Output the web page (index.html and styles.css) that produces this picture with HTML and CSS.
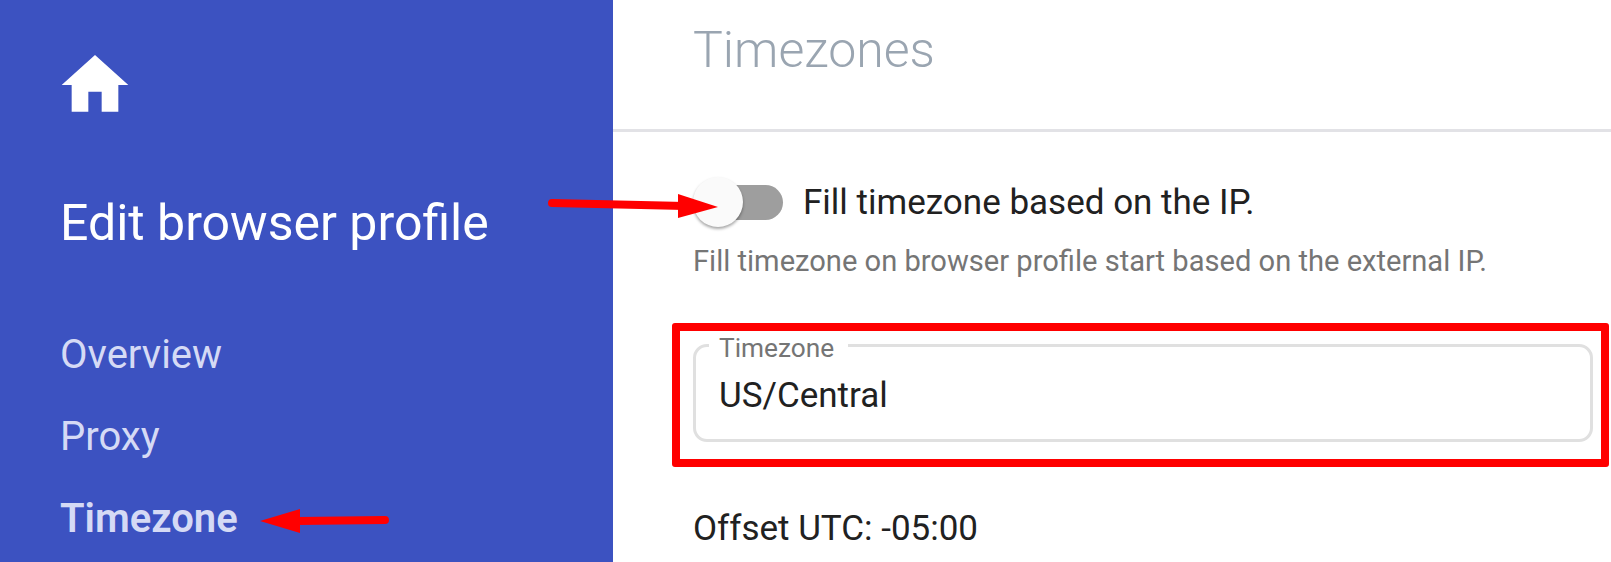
FILE: index.html

```html
<!DOCTYPE html>
<html lang="en">
<head>
    <meta charset="UTF-8">
    <title>Edit browser profile - Timezones</title>
    <link rel="stylesheet" href="styles.css">
</head>
<body>
    <aside class="sidebar">
        <svg class="home-icon" viewBox="0 0 24 24"><path d="M10 20v-6h4v6h5v-8h3L12 3 2 12h3v8z"/></svg>
        <h2 class="sidebar-title">Edit browser profile</h2>
        <nav class="sidebar-nav">
            <a href="#overview">Overview</a>
            <a href="#proxy">Proxy</a>
            <a href="#timezone" class="active">Timezone</a>
        </nav>
    </aside>

    <main class="content">
        <header class="content-header">
            <h1>Timezones</h1>
        </header>
        <section class="content-body">
            <div class="switch-row">
                <span class="switch"><span class="switch-thumb"></span></span>
                <span class="switch-label">Fill timezone based on the IP.</span>
            </div>
            <p class="helper">Fill timezone on browser profile start based on the external IP.</p>
            <fieldset class="field">
                <legend>Timezone</legend>
                <div class="field-value">US/Central</div>
            </fieldset>
            <p class="offset">Offset UTC: -05:00</p>
        </section>
    </main>

    <!-- red annotations drawn over the screenshot -->
    <div class="mark-box"></div>
    <svg class="marks" viewBox="0 0 1611 562">
        <path class="mark-line" d="M552 203 L685 206"/>
        <polygon class="mark-head" points="678,194 718,207 678,218"/>
        <path class="mark-line" d="M385 520 L297 521"/>
        <polygon class="mark-head" points="300,509 260,521 300,533"/>
    </svg>
</body>
</html>
```

FILE: styles.css

```css
* {
    margin: 0;
    padding: 0;
    box-sizing: border-box;
}

body {
    font-family: Roboto, sans-serif;
    background: #fff;
    color: #212121;
    height: 100vh;
    overflow: hidden;
    display: flex;
}

.sidebar {
    width: 613px;
    flex-shrink: 0;
    background: #3c52c1;
    padding: 45px 0 0 60px;
}

.home-icon {
    display: block;
    width: 80px;
    height: 80px;
    margin-left: -5px;
    fill: #fff;
}

.sidebar-title {
    margin-top: 66px;
    font-size: 50px;
    line-height: 64px;
    font-weight: 400;
    color: #fff;
}

.sidebar-nav {
    margin-top: 70px;
    display: flex;
    flex-direction: column;
    gap: 22px;
}

.sidebar-nav a {
    font-size: 40px;
    line-height: 60px;
    color: #d5daf5;
    text-decoration: none;
}

.sidebar-nav a.active {
    font-weight: 600;
}

.content {
    flex: 1;
    min-width: 0;
}

.content-header {
    height: 132px;
    padding-left: 80px;
    border-bottom: 3px solid #e2e2e6;
}

.content-header h1 {
    font-size: 50px;
    line-height: 100px;
    font-weight: 300;
    color: #9aa5b1;
}

.content-body {
    padding: 45px 18px 0 80px;
}

.switch-row {
    display: flex;
    align-items: center;
    height: 50px;
}

.switch {
    position: relative;
    display: block;
    width: 85px;
    height: 35px;
    margin-left: 5px;
    border-radius: 18px;
    background: #9e9e9e;
}

.switch-thumb {
    position: absolute;
    left: -5px;
    top: -8px;
    width: 50px;
    height: 50px;
    border-radius: 50%;
    background: #fafafa;
    box-shadow: 0 2px 3px rgba(0, 0, 0, 0.35);
}

.switch-label {
    margin-left: 20px;
    font-size: 35px;
}

.helper {
    margin-top: 16px;
    font-size: 29.1px;
    line-height: 36px;
    color: #757575;
}

.field {
    margin-top: 50px;
    height: 113px;
    border: 3px solid #e0e0e0;
    border-radius: 14px;
    padding: 0 23px;
}

.field legend {
    margin-left: -10px;
    padding: 6px 14px 0 10px;
    font-size: 26.25px;
    line-height: 26px;
    color: #757575;
}

.field-value {
    margin-top: 15px;
    font-size: 35px;
    line-height: 40px;
}

.offset {
    margin-top: 67px;
    font-size: 35px;
    line-height: 40px;
}

.mark-box {
    position: absolute;
    left: 672px;
    top: 323px;
    width: 937px;
    height: 144px;
    border: 8px solid #f00;
    border-radius: 3px;
}

.marks {
    position: absolute;
    left: 0;
    top: 0;
    width: 1611px;
    height: 562px;
}

.mark-line {
    fill: none;
    stroke: #f00;
    stroke-width: 8;
    stroke-linecap: round;
}

.mark-head {
    fill: #f00;
}
```
